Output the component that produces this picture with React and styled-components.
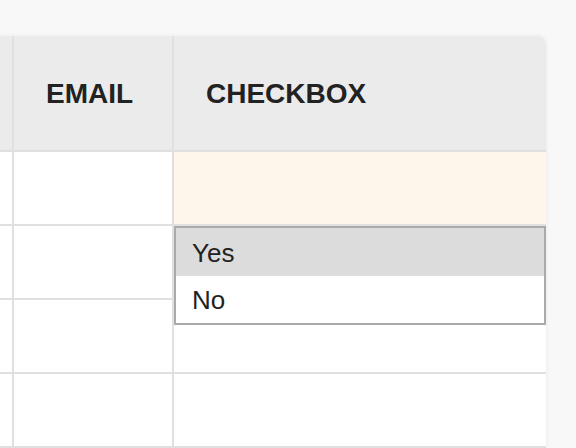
import React from "react";
import styled, { createGlobalStyle } from "styled-components";

const Global = createGlobalStyle`
  html, body { margin: 0; padding: 0; background: #f8f8f8; }
  body { font-family: "Liberation Sans", Arial, sans-serif; overflow: hidden; }
`;

const Page = styled.div`
  width: 576px;
  height: 448px;
  padding-top: 36px;
  box-sizing: border-box;
  overflow: hidden;
`;

const Table = styled.div`
  display: grid;
  grid-template-columns: 164px 160px 372px;
  width: 696px;
  margin-left: -150px;
  background: #fff;
  border-top-right-radius: 8px;
  box-shadow: 0 0 4px rgba(0, 0, 0, 0.07);
`;

const HeaderCell = styled.div`
  height: 116px;
  box-sizing: border-box;
  background: #ebebeb;
  border-bottom: 2px solid #e0e0e0;
  border-right: ${(p) => (p.$last ? "none" : "2px solid #e0e0e0")};
  border-top-right-radius: ${(p) => (p.$last ? "8px" : "0")};
  display: flex;
  align-items: center;
  padding-left: 32px;
  padding-top: 1px;
  font-size: 28px;
  font-weight: 700;
  color: #222;
`;

const Cell = styled.div`
  position: relative;
  height: 72px;
  background: ${(p) => (p.$active ? "#fff6eb" : "#fff")};
  border-bottom: 2px solid #e0e0e0;
  border-right: ${(p) => (p.$last ? "none" : "2px solid #e0e0e0")};
`;

const Dropdown = styled.div`
  position: absolute;
  top: calc(100% + 2px);
  left: 0;
  right: 0;
  z-index: 2;
  background: #fff;
  border: 2px solid #aaa;
  display: flex;
  flex-direction: column;
`;

const Option = styled.div`
  height: ${(p) => p.$h}px;
  box-sizing: border-box;
  display: flex;
  align-items: center;
  padding-left: 16px;
  padding-top: 2px;
  font-size: 26px;
  color: #222;
  background: ${(p) => (p.$selected ? "#dcdcdc" : "#fff")};
`;

const columns = ["", "EMAIL", "CHECKBOX"];

export default function App() {
  const rows = [0, 1, 2, 3];
  return (
    <Page>
      <Global />
      <Table>
        {columns.map((c, i) => (
          <HeaderCell key={i} $last={i === columns.length - 1}>
            {c}
          </HeaderCell>
        ))}
        {rows.map((r) =>
          columns.map((c, i) => (
            <Cell
              key={`${r}-${i}`}
              $last={i === columns.length - 1}
              $active={r === 0 && i === 2}
            >
              {r === 0 && i === 2 && (
                <Dropdown>
                  <Option $selected $h={48}>Yes</Option>
                  <Option $h={47}>No</Option>
                </Dropdown>
              )}
            </Cell>
          ))
        )}
      </Table>
    </Page>
  );
}
